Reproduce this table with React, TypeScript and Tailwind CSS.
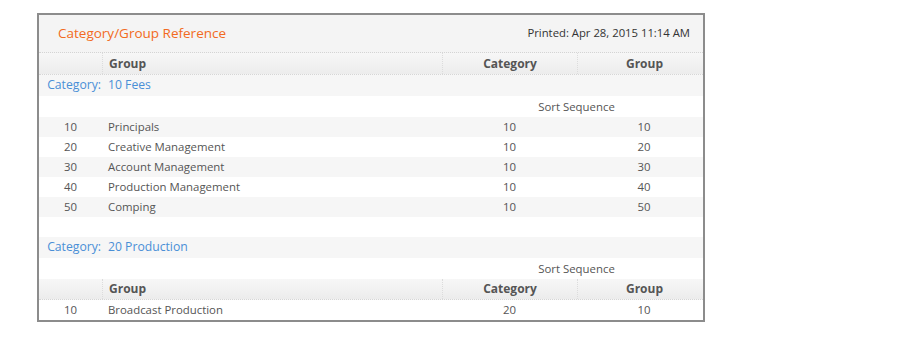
const font = { fontFamily: '"Open Sans", "Liberation Sans", sans-serif' };

interface Row {
  seq: string;
  name: string;
  cat: string;
  grp: string;
}

const fees: Row[] = [
  { seq: "10", name: "Principals", cat: "10", grp: "10" },
  { seq: "20", name: "Creative Management", cat: "10", grp: "20" },
  { seq: "30", name: "Account Management", cat: "10", grp: "30" },
  { seq: "40", name: "Production Management", cat: "10", grp: "40" },
  { seq: "50", name: "Comping", cat: "10", grp: "50" },
];

const production: Row[] = [{ seq: "10", name: "Broadcast Production", cat: "20", grp: "10" }];

function HeaderRow({ tall }: { tall?: boolean }) {
  return (
    <div
      className={`flex ${tall ? "h-[22px]" : "h-[21px]"} items-center border-b border-dotted border-[#d6d6d6] bg-gradient-to-b from-[#f7f7f7] to-[#ececec] text-[12px] font-bold text-[#555]`}
    >
      <div className="w-[63px]" />
      <div className="w-[340px] h-full flex items-center pl-[6px] border-l border-dotted border-[#dcdcdc]">Group</div>
      <div className="w-[135px] h-full flex items-center justify-center border-l border-dotted border-[#dcdcdc]">Category</div>
      <div className="flex-1 h-full flex items-center justify-center pl-2 border-l border-dotted border-[#dcdcdc]">Group</div>
    </div>
  );
}

function DataRow({ row, shaded }: { row: Row; shaded: boolean }) {
  return (
    <div className={`flex h-[20px] items-center text-[11.4px] text-[#555] ${shaded ? "bg-[#f6f6f6]" : "bg-white"}`}>
      <div className="w-[63px] text-center">{row.seq}</div>
      <div className="w-[340px] pl-[6px]">{row.name}</div>
      <div className="w-[135px] text-center">{row.cat}</div>
      <div className="flex-1 text-center pl-2">{row.grp}</div>
    </div>
  );
}

function CategoryRow({ label }: { label: string }) {
  return (
    <div className="flex h-[21px] items-center bg-[#f6f6f6] text-[12.2px] text-[#4a8fd6]">
      <div className="w-[63px] text-right pr-[1px]">Category:</div>
      <div className="pl-[6px]">{label}</div>
    </div>
  );
}

function SortRow() {
  return (
    <div className="flex h-[21px] items-center bg-white text-[11.4px] text-[#555]">
      <div className="w-[403px]" />
      <div className="flex-1 text-center pl-2">Sort Sequence</div>
    </div>
  );
}

export default function App() {
  return (
    <div className="bg-white w-[910px] h-[340px] pt-[13px] pl-[37px]" style={font}>
      <div className="w-[668px] border-2 border-[#8c8c8c] bg-white">
        <div className="flex h-[38px] items-center justify-between bg-[#f4f4f4] border-b border-dotted border-[#d4d4d4] pl-[19px] pr-[13px]">
          <span className="text-[13.5px] text-[#f26a21]">Category/Group Reference</span>
          <span className="text-[11.3px] text-[#333]">Printed: Apr 28, 2015 11:14 AM</span>
        </div>
        <HeaderRow tall />
        <CategoryRow label="10 Fees" />
        <SortRow />
        {fees.map((r, i) => (
          <DataRow key={r.seq} row={r} shaded={i % 2 === 0} />
        ))}
        <div className="h-[20px] bg-white" />
        <CategoryRow label="20 Production" />
        <SortRow />
        <HeaderRow />
        {production.map((r) => (
          <DataRow key={r.seq} row={r} shaded={false} />
        ))}
      </div>
    </div>
  );
}
